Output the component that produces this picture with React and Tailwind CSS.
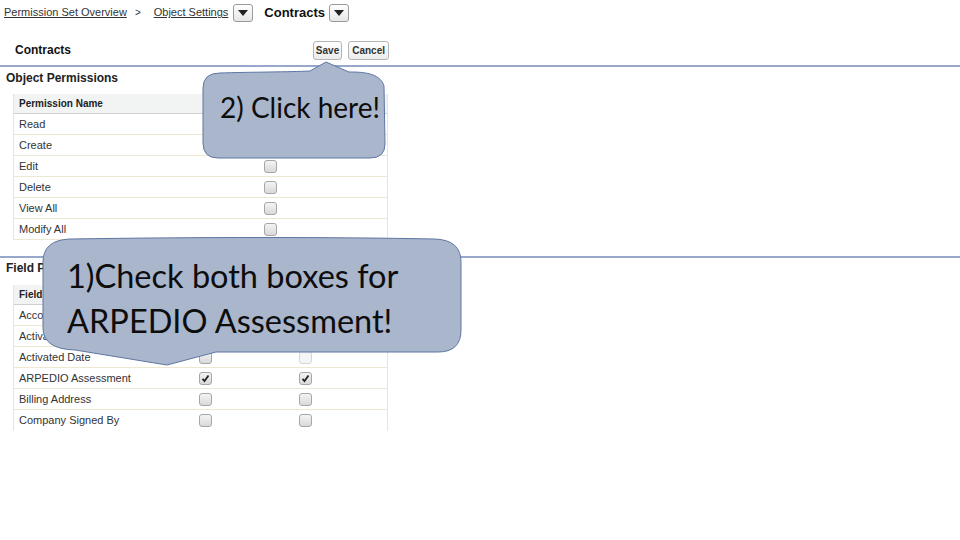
import React from "react";

function Cb({ checked, faded }) {
  return (
    <span
      className={`inline-flex h-[13px] w-[13px] items-center justify-center rounded-[3px] border ${faded ? "border-[#d6d6d6] bg-[#f5f5f5]" : "border-[#a6a6a6] bg-gradient-to-b from-[#f4f4f4] to-[#d9d9d9]"}`}
    >
      {checked && (
        <svg width="9" height="9" viewBox="0 0 9 9">
          <path d="M1.5 4.8 L3.5 7 L7.5 1.5" fill="none" stroke="#222" strokeWidth="1.8" />
        </svg>
      )}
    </span>
  );
}

function DropBtn() {
  return (
    <span className="inline-flex h-[18px] w-[20px] items-center justify-center rounded-[3px] border border-[#9a9a9a] bg-gradient-to-b from-white to-[#e6e6e6]">
      <svg width="10" height="6" viewBox="0 0 10 6">
        <path d="M0 0 L10 0 L5 6 Z" fill="#222" />
      </svg>
    </span>
  );
}

const objRows = ["Read", "Create", "Edit", "Delete", "View All", "Modify All"];
const fieldRows = [
  { n: "Account Name", a: false, b: false },
  { n: "Activated By", a: false, b: false },
  { n: "Activated Date", a: false, b: false, fb: true },
  { n: "ARPEDIO Assessment", a: true, b: true },
  { n: "Billing Address", a: false, b: false },
  { n: "Company Signed By", a: false, b: false },
];

export default function App() {
  return (
    <div className="relative h-[540px] w-[960px] overflow-hidden bg-white font-['Liberation_Sans',Arial,sans-serif] text-[#222]">
      {/* breadcrumb */}
      <div className="flex h-[24px] items-center pl-[4px] pt-[1px] text-[11px] text-[#333]">
        <span className="underline">Permission Set Overview</span>
        <span className="ml-[8px] mr-[13px] text-[10px]">&gt;</span>
        <span className="underline">Object Settings</span>
        <span className="ml-[5px]"><DropBtn /></span>
        <span className="ml-[11px] text-[13px] font-bold text-[#111]">Contracts</span>
        <span className="ml-[4px]"><DropBtn /></span>
      </div>
      {/* header */}
      <div className="mt-[16px] flex h-[20px] w-[389px] items-center justify-between pl-[15px]">
        <span className="text-[12px] font-bold text-[#111]">Contracts</span>
        <div className="flex gap-[6px]">
          <span className="inline-flex h-[19px] items-center rounded-[3px] border border-[#b5b5b5] bg-gradient-to-b from-white to-[#ececec] px-[2px] text-[10px] font-bold text-[#333]">Save</span>
          <span className="inline-flex h-[19px] items-center rounded-[3px] border border-[#b5b5b5] bg-gradient-to-b from-white to-[#ececec] px-[3px] text-[10px] font-bold text-[#333]">Cancel</span>
        </div>
      </div>
      <div className="mt-[5px] h-[2px] bg-[#97a8cb]" />
      <div className="pl-[6px] pt-[4px] text-[12px] font-bold leading-[15px] text-[#222]">Object Permissions</div>

      {/* object table */}
      <div className="ml-[13px] mt-[8px] w-[375px] border-x border-[#e4e4e4]">
        <div className="flex h-[20px] items-center border-b border-[#cfcfcf] bg-[#f2f3f3] pl-[5px] text-[10px] font-bold text-[#222]">
          <span className="w-[245px]">Permission Name</span>
        </div>
        {objRows.map((r) => (
          <div key={r} className="flex h-[21px] items-center border-b border-[#ede8d2] text-[11px] text-[#333]">
            <span className="w-[250px] pl-[5px]">{r}</span>
            <Cb />
          </div>
        ))}
      </div>

      <div className="mt-[16px] h-[2px] bg-[#97a8cb]" />
      <div className="pl-[6px] pt-[3px] text-[12px] font-bold leading-[15px] text-[#222]">Field Permissions</div>

      {/* field table */}
      <div className="ml-[13px] mt-[9px] w-[375px] border-x border-[#e4e4e4]">
        <div className="flex h-[20px] items-center border-b border-[#cfcfcf] bg-[#f2f3f3] pl-[5px] text-[10px] font-bold text-[#222]">
          <span className="w-[170px]">Field Name</span>
        </div>
        {fieldRows.map((r, i) => (
          <div key={r.n} className={`flex h-[21px] items-center text-[11px] text-[#333] ${i < fieldRows.length - 1 ? "border-b border-[#ede8d2]" : ""}`}>
            <span className="w-[185px] pl-[5px]">{r.n}</span>
            <Cb checked={r.a} />
            <span className="w-[87px]" />
            <Cb checked={r.b} faded={r.fb} />
          </div>
        ))}
      </div>

      {/* callouts */}
      <svg className="pointer-events-none absolute left-0 top-0" width="960" height="540" viewBox="0 0 960 540">
        <path
          d="M 220 73 C 250 72 290 72 310 71 L 326 62 L 349 72 C 360 72 380 72 384 86 L 385 144 Q 385 158 370 158 L 218 158 Q 203 158 203 143 L 203 88 Q 203 73 220 73 Z"
          fill="#a9b6cb"
          stroke="#5f76a3"
          strokeWidth="1"
        />
        <path
          d="M 70 239 C 200 237 330 237 435 239 Q 461 240 461 262 L 461 330 Q 461 352 438 352 L 216 352 L 167 365 L 75 350 Q 43 349 43 328 L 43 262 Q 43 240 70 239 Z"
          fill="#a9b6cb"
          stroke="#5f76a3"
          strokeWidth="1"
        />
      </svg>
      <div className="absolute left-[220px] top-[89px] whitespace-nowrap font-['Lato',sans-serif] text-[28px] leading-[36px] text-[#0d0d0d]">
        2) Click here!
      </div>
      <div className="absolute left-[67px] top-[253px] whitespace-nowrap font-['Lato',sans-serif] text-[32.5px] leading-[45px] text-[#0d0d0d]">
        <div>1)Check both boxes for</div>
        <div>ARPEDIO Assessment!</div>
      </div>
    </div>
  );
}
